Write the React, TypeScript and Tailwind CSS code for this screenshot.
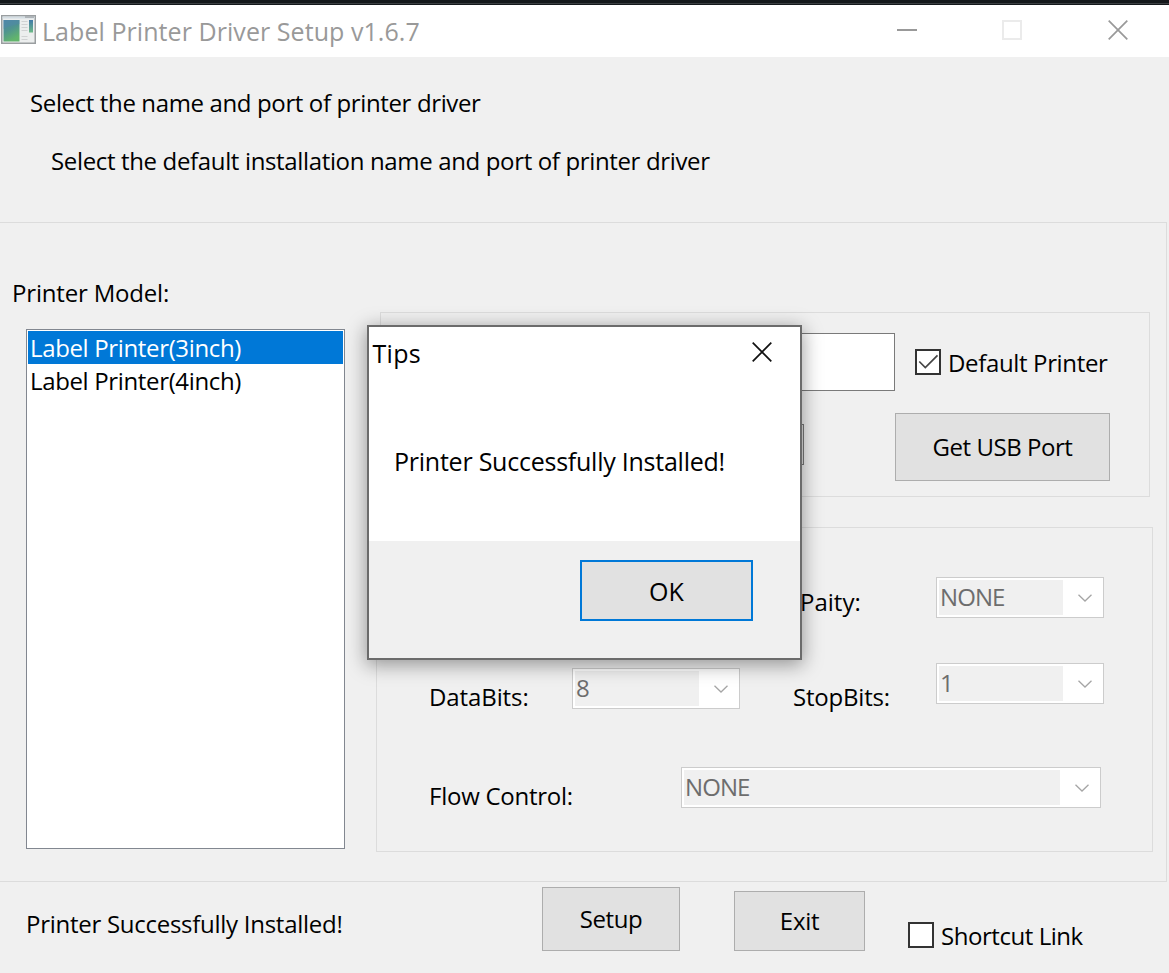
import type { ReactNode } from "react";

function AppIcon() {
  return (
    <svg width="35" height="29" viewBox="0 0 35 29" className="block shrink-0">
      <defs>
        <linearGradient id="screen" x1="0" y1="0" x2="0.4" y2="1">
          <stop offset="0" stopColor="#4f86a8" />
          <stop offset="0.5" stopColor="#4f9390" />
          <stop offset="1" stopColor="#62b56c" />
        </linearGradient>
        <linearGradient id="side" x1="0" y1="0" x2="0" y2="1">
          <stop offset="0" stopColor="#4179a8" />
          <stop offset="1" stopColor="#6cba86" />
        </linearGradient>
      </defs>
      <rect x="0.75" y="0.75" width="33.500" height="27.500" fill="#eceeee" stroke="#9a9ea0" strokeWidth="1.500" />
      <rect x="1.500" y="1.500" width="32" height="2" fill="#d4dde3" />
      <rect x="24" y="1" width="9" height="2" fill="#aeb4b8" />
      <rect x="2.500" y="5" width="16" height="21.500" fill="url(#screen)" />
      <path d="M2.500 14 C7 11 13 10 18.500 9 V5 H2.500 Z" fill="#4f88ab" opacity="0.45" />
      <path d="M20.500 6.500h6M20.500 9.500h6M20.500 12.500h6M20.500 15.500h6M20.500 21.500h6M20.500 24.500h6" stroke="#d0d2d3" strokeWidth="1" />
      <rect x="28" y="5" width="4" height="12.500" fill="url(#side)" />
    </svg>
  );
}

function Cross({ color }: { color: string }) {
  return (
    <svg width="20" height="20" viewBox="0 0 20 20" className="block shrink-0">
      <path d="M0.700 0.700 19.300 19.300M19.300 0.700 0.700 19.300" stroke={color} strokeWidth="1.700" fill="none" />
    </svg>
  );
}

function Combo({ value, className }: { value: string; className: string }) {
  return (
    <div className={`flex h-[41px] shrink-0 border border-[#cccccc] bg-white p-0.5 pr-0 text-[#6d6d6d] ${className}`}>
      <div className="flex h-[35px] grow items-center bg-[#f0f0f0] pb-0.5 pl-px tracking-[-0.9px]">{value}</div>
      <div className="flex w-10 shrink-0 items-center pt-px pl-[15px]">
        <svg width="14" height="8" viewBox="0 0 14 8" className="block">
          <path d="M0.500 0.700 7 7 13.500 0.700" fill="none" stroke="#a5a5a5" strokeWidth="1.300" />
        </svg>
      </div>
    </div>
  );
}

function Button({ children, className }: { children: ReactNode; className: string }) {
  return (
    <button className={`flex shrink-0 items-center justify-center border border-[#adadad] bg-[#e1e1e1] ${className}`}>
      {children}
    </button>
  );
}

function CheckBox({ checked = false, className = "" }: { checked?: boolean; className?: string }) {
  return (
    <div className={`size-[26px] shrink-0 border-2 border-[#333333] bg-white ${className}`}>
      {checked && (
        <svg width="22" height="22" viewBox="0 0 22 22" className="block">
          <path d="M2.300 10.500 8.300 16.500 20.500 4.300" fill="none" stroke="#444444" strokeWidth="1.700" />
        </svg>
      )}
    </div>
  );
}

function TipsDialog() {
  return (
    <div className="absolute top-[325px] left-[367px] flex h-[335px] w-[435px] flex-col border-2 border-[#6b6b6b] bg-white text-[25px] shadow-[0_4px_18px_1px_rgba(0,0,0,0.38)]">
      <div className="flex h-[52px] items-center justify-between pr-7 pl-[3.500px]">
        <span className="tracking-[0.3px]">Tips</span>
        <div className="pb-0.5">
          <Cross color="#111111" />
        </div>
      </div>
      <div className="flex grow pt-[66px] pl-[25px] tracking-[-0.24px]">
        <span className="h-8">Printer Successfully Installed!</span>
      </div>
      <div className="flex h-[117px] shrink-0 justify-end bg-[#f0f0f0] pt-[19px] pr-[47px]">
        <button className="flex h-[61px] w-[173px] items-center justify-center border-2 border-[#0078d7] bg-[#e1e1e1]">
          OK
        </button>
      </div>
    </div>
  );
}

export default function App() {
  return (
    <div className="relative flex h-[973px] w-[1169px] flex-col overflow-hidden bg-[#f0f0f0] font-['Open_Sans','Noto_Sans',sans-serif] text-[24px] leading-8 whitespace-nowrap text-black">
      <div className="h-[5px] shrink-0 bg-[#14181b] pt-[3px]">
        <div className="h-px bg-[#3b3f42]" />
      </div>

      <header className="flex h-[52px] shrink-0 items-center bg-white">
        <div className="mr-[5px] mb-[3px] ml-px">
          <AppIcon />
        </div>
        <span className="grow pl-px text-[25px] tracking-[0.06px] text-[#999999]">Label Printer Driver Setup v1.6.7</span>
        <div className="mb-0.5 flex items-center pr-[41px]">
          <div className="h-0.5 w-5 bg-[#999999]" />
          <div className="mr-[86px] ml-[85px] size-5 border-2 border-[#ebebeb]" />
          <Cross color="#999999" />
        </div>
      </header>

      <section className="flex h-[165px] shrink-0 flex-col pt-[30px]">
        <p className="ml-[30px] tracking-[-0.37px]">Select the name and port of printer driver</p>
        <p className="mt-[26px] ml-[51px] tracking-[-0.35px]">
          Select the default installation name and port of printer driver
        </p>
      </section>

      <main className="mr-0.5 flex h-[660px] shrink-0 border-t border-r border-b border-[#dcdcdc]">
        <section className="flex w-[345px] shrink-0 flex-col pt-[54px]">
          <h2 className="ml-3 tracking-[-0.18px]">Printer Model:</h2>
          <ul className="mt-5 ml-[26px] h-[520px] border border-[#828790] bg-white p-px tracking-[-0.35px]">
            <li className="flex h-[33px] items-center bg-[#0078d7] pl-0.5 text-white">Label Printer(3inch)</li>
            <li className="flex h-[33px] items-center pl-0.5">Label Printer(4inch)</li>
          </ul>
        </section>

        <section className="flex grow flex-col">
          <div className="mt-[89px] ml-[35px] h-[185px] w-[770px] shrink-0 border border-[#dcdcdc] pt-5">
            <div className="flex items-center">
              <div className="ml-[189px] h-[58px] w-[325px] shrink-0 border border-[#7a7a7a] bg-white" />
              <CheckBox checked className="ml-5" />
              <span className="mt-0.5 ml-[7px] tracking-[-0.35px]">Default Printer</span>
            </div>
            <div className="mt-[22px] flex">
              <div className="mt-[11px] ml-[189px] h-[41px] w-[234px] shrink-0 border border-[#7a7a7a] bg-[#e1e1e1]" />
              <Button className="ml-[91px] h-[68px] w-[215px] tracking-[-0.45px]">Get USB Port</Button>
            </div>
          </div>

          <div className="mt-[30px] ml-[31px] h-[325px] w-[777px] shrink-0 border border-[#dcdcdc] pt-[49px]">
            <div className="flex">
              <span className="mt-[9px] ml-[422px] w-[137px] shrink-0 pl-px">Paity:</span>
              <Combo value="NONE" className="w-[168px]" />
            </div>
            <div className="mt-[45px] flex h-[46px]">
              <span className="mt-[18px] ml-[51px] w-36 shrink-0 pl-px tracking-[-0.1px]">DataBits:</span>
              <Combo value="8" className="mt-[5px] w-[168px]" />
              <span className="mt-[18px] ml-[52px] w-36 shrink-0 pl-px tracking-[-0.2px]">StopBits:</span>
              <Combo value="1" className="w-[168px]" />
            </div>
            <div className="mt-[58px] flex">
              <span className="mt-[13px] ml-[51px] w-[253px] shrink-0 pl-px tracking-[-0.25px]">Flow Control:</span>
              <Combo value="NONE" className="w-[420px]" />
            </div>
          </div>
        </section>
      </main>

      <footer className="flex items-start">
        <span className="mt-[26px] ml-[25px] w-[517px] shrink-0 pl-px tracking-[-0.27px]">
          Printer Successfully Installed!
        </span>
        <Button className="mt-[5px] h-16 w-[138px] tracking-[-0.4px]">Setup</Button>
        <Button className="mt-[9px] ml-[54px] h-[60px] w-[131px] tracking-[-0.3px]">Exit</Button>
        <CheckBox className="mt-10 ml-[43px]" />
        <span className="mt-[38px] ml-[7px] tracking-[-0.45px]">Shortcut Link</span>
      </footer>

      <TipsDialog />
    </div>
  );
}
